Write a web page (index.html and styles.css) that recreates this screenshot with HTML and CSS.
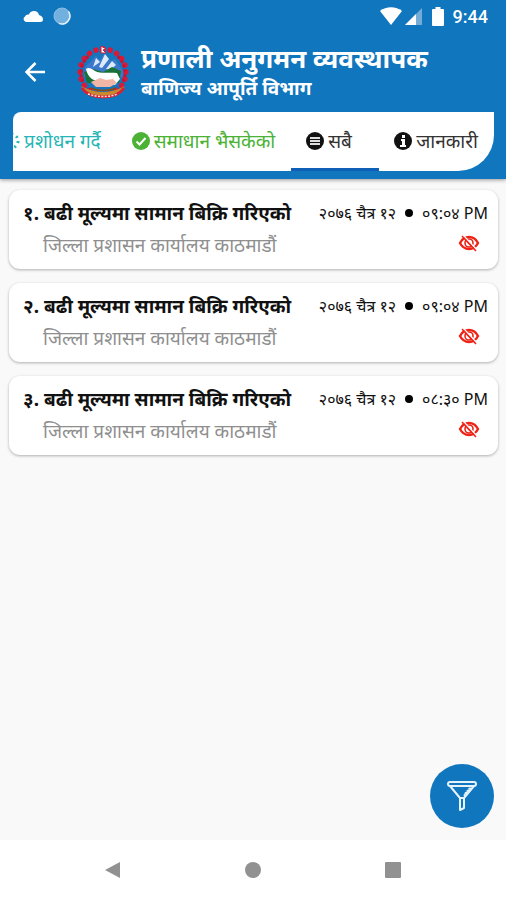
FILE: index.html
```html
<!DOCTYPE html>
<html lang="ne">
<head>
    <meta charset="UTF-8">
    <meta name="viewport" content="width=device-width, initial-scale=1.0">
    <title>प्रणाली अनुगमन व्यवस्थापक</title>
    <link rel="stylesheet" href="styles.css">
</head>
<body>

    <!-- shared icon used by every card -->
    <svg class="sprite" width="0" height="0" aria-hidden="true">
        <symbol id="eye-off" viewBox="0 0 22 18">
            <path d="M2 9C4 5 7 3 11 3s7 2 9 6c-2 4-5 6-9 6s-7-2-9-6z" fill="none" stroke="currentColor" stroke-width="2.400"/>
            <circle cx="11" cy="9" r="4" fill="none" stroke="currentColor" stroke-width="1.600"/>
            <path d="M9 7l5 5" stroke="currentColor" stroke-width="2"/>
            <path d="M5 1l14 15" stroke="#fff" stroke-width="1.400"/>
            <path d="M4 2l14 15" stroke="currentColor" stroke-width="1.600"/>
        </symbol>
    </svg>

    <header class="header">
        <div class="status-bar">
            <svg class="cloud" width="20" height="12" viewBox="0 0 20 12"><path d="M3 12a3 3 0 0 1-1-5.500Q3 4 6 4.500 7 1 11 1q4 0 5 4 4 1 4 4.500 0 2.500-3 2.500z" fill="#fff"/></svg>
            <svg width="18" height="18" viewBox="0 0 18 18"><circle cx="9" cy="9" r="8" fill="#72b1df" stroke="#8fc1e6"/><path d="M15.500 4.500A8 8 0 0 1 6 16.400" fill="none" stroke="#e4f1fa" stroke-width="1.500"/></svg>
            <svg class="wifi" width="22" height="18" viewBox="0 0 22 18"><path d="M0 4C6-1 16-1 22 4L11 18z" fill="#fff"/></svg>
            <svg class="signal" width="17" height="17" viewBox="0 0 17 17"><path d="M17 0v17H0z" fill="#72acd7"/><path d="M11 6v11H0z" fill="#fff"/></svg>
            <svg class="battery" width="12" height="19" viewBox="0 0 12 19"><path d="M3.500 0h5v2H11q1 0 1 1v15q0 1-1 1H1q-1 0-1-1V3q0-1 1-1h2.500z" fill="#fff"/></svg>
            <span class="clock">9:44</span>
        </div>

        <div class="title-bar">
            <button class="back" type="button" aria-label="Back">
                <svg width="20" height="20" viewBox="0 0 20 20" fill="none" stroke="#fff" stroke-width="2.600"><path d="M20 10H2M10.500 1L1.500 10l9 9"/></svg>
            </button>
            <svg class="emblem" width="54" height="54" viewBox="0 0 54 54">
                <circle cx="27" cy="27" r="20" fill="#1676bd"/>
                <path d="M9 22L20 11l4 4 4-6 7 7 4-2 8 12v6H8z" fill="#3c78ca"/>
                <path d="M20 13l4 4-7 5zM29 9l4 5-7 9-3-1zM36 16l4 4-6 5-4-1z" fill="#dbe9fa"/>
                <path d="M8 27l9-3 10 3 9-5 9 4-2 12H11z" fill="#19713a"/>
                <path d="M10 24c2-2 5-1 9 2 6 3 13 1 22 2l3 6-5 6-11-4c-9 1-16-2-18-12z" fill="#fff"/>
                <path d="M15 37l9-4 6 2 7-1 4 4-7 4H20z" fill="#f1b6a5"/>
                <circle cx="27" cy="27" r="23" fill="none" stroke="#d7193a" stroke-width="5.500" stroke-linecap="round" stroke-dasharray="0.1 6.900" pathLength="140"/>
                <path d="M7 37A22 22 0 0 1 14 10M47 37A22 22 0 0 0 40 10" fill="none" stroke="#c51532" stroke-width="3" stroke-dasharray="3 2"/>
                <path d="M5 41q22 12 44 0l-6 8q-16 7-32 0z" fill="#c88a2a"/>
                <path d="M14 43q13 5 26 0" fill="none" stroke="#8d4a18" stroke-width="1.500"/>
                <path d="M6 43q6 9 21 9t21-9" fill="none" stroke="#d42339" stroke-width="3"/>
                <path d="M12 49q15 5 30 0" fill="none" stroke="#ffe3dc" stroke-width="1.400" stroke-dasharray="2 1.400"/>
                <path d="M25 1l5 3-3 1 3 3h-5z" fill="#fff" stroke="#d7193a"/>
            </svg>
            <div class="titles">
                <h1>प्रणाली अनुगमन व्यवस्थापक</h1>
                <h2>बाणिज्य आपूर्ति विभाग</h2>
            </div>
        </div>

        <nav class="tabs">
            <a class="tab teal" href="#review">
                <svg width="18" height="18" viewBox="0 0 18 18"><circle cx="9" cy="9" r="7" fill="none" stroke="currentColor" stroke-width="3" stroke-dasharray="2 3.500"/></svg>
                प्रशोधन गर्दै
            </a>
            <a class="tab green" href="#solved">
                <svg width="18" height="18" viewBox="0 0 18 18"><circle cx="9" cy="9" r="9" fill="currentColor"/><path d="M4.500 9.500l3 3 6-6.500" fill="none" stroke="#fff" stroke-width="2"/></svg>
                समाधान भैसकेको
            </a>
            <a class="tab active" href="#all">
                <svg width="18" height="18" viewBox="0 0 18 18"><circle cx="9" cy="9" r="9" fill="#111"/><path d="M4 6h10M4 9h10M4 12h10" stroke="#ddd" stroke-width="1.800"/></svg>
                सबै
            </a>
            <a class="tab" href="#info">
                <svg width="18" height="18" viewBox="0 0 18 18"><circle cx="9" cy="9" r="9" fill="#111"/><path d="M8 3h3v3H8zM7 7h4v6h1v2H6v-2h2V9H7z" fill="#fff"/></svg>
                जानकारी
            </a>
        </nav>
    </header>

    <main class="list">
        <article class="card">
            <div class="row">
                <h3>१. बढी मूल्यमा सामान बिक्रि गरिएको</h3>
                <div class="time"><span>२०७६ चैत्र १२</span><i class="dot"></i><span>०९:०४ PM</span></div>
            </div>
            <div class="row">
                <p>जिल्ला प्रशासन कार्यालय काठमाडौं</p>
                <svg class="eye" width="22" height="18"><use href="#eye-off"/></svg>
            </div>
        </article>

        <article class="card">
            <div class="row">
                <h3>२. बढी मूल्यमा सामान बिक्रि गरिएको</h3>
                <div class="time"><span>२०७६ चैत्र १२</span><i class="dot"></i><span>०९:०४ PM</span></div>
            </div>
            <div class="row">
                <p>जिल्ला प्रशासन कार्यालय काठमाडौं</p>
                <svg class="eye" width="22" height="18"><use href="#eye-off"/></svg>
            </div>
        </article>

        <article class="card">
            <div class="row">
                <h3>३. बढी मूल्यमा सामान बिक्रि गरिएको</h3>
                <div class="time"><span>२०७६ चैत्र १२</span><i class="dot"></i><span>०८:३० PM</span></div>
            </div>
            <div class="row">
                <p>जिल्ला प्रशासन कार्यालय काठमाडौं</p>
                <svg class="eye" width="22" height="18"><use href="#eye-off"/></svg>
            </div>
        </article>

        <button class="filter" type="button" aria-label="Filter">
            <svg width="30" height="30" viewBox="0 0 30 30" fill="none" stroke="#e6f2fc" stroke-width="2" stroke-linejoin="round">
                <rect x="1" y="1" width="28" height="4" rx="2"/>
                <path d="M3 5l10 12v12l4-2V17L27 5M13 17h4"/>
                <path d="M18 13l5-6M17 15l7-8" stroke-dasharray="2 1"/>
            </svg>
        </button>
    </main>

    <footer class="nav-bar">
        <button type="button" aria-label="Back"><svg width="16" height="16" viewBox="0 0 16 16"><path d="M15 0v16L0 8z"/></svg></button>
        <button type="button" aria-label="Home"><svg width="16" height="16" viewBox="0 0 16 16"><circle cx="8" cy="8" r="8"/></svg></button>
        <button type="button" aria-label="Recent apps"><svg width="16" height="16" viewBox="0 0 16 16"><rect width="16" height="16" rx="1"/></svg></button>
    </footer>

</body>
</html>
```

FILE: styles.css
```css
:root {
    --blue: #1076bd;
}

* {
    box-sizing: border-box;
}

body {
    margin: 0;
    min-height: 100vh;
    display: flex;
    flex-direction: column;
    background: #f9f9f9;
    color: #111;
    font-family: "Noto Sans", "Noto Sans Devanagari", sans-serif;
    font-feature-settings: "locl" 0; /* plain Devanagari digits */
}

h1, h2, h3, p {
    margin: 0;
    white-space: nowrap;
}

svg {
    display: block;
    flex-shrink: 0;
}

button {
    padding: 0;
    border: none;
    background: none;
    cursor: pointer;
}

.sprite {
    position: absolute;
}

/* Header */
.header {
    padding-bottom: 8px;
    background: var(--blue);
    box-shadow: 0 1px 4px rgba(0, 0, 0, 0.4);
}

.status-bar {
    display: flex;
    align-items: center;
    height: 32px;
    padding: 0 18px 0 23px;
}

.cloud {
    margin-right: 10px;
}

.wifi {
    margin-left: auto;
}

.signal {
    margin-left: 3px;
}

.battery {
    margin: 0 9px 0 10px;
}

.clock {
    color: #fff;
    font-family: Roboto, sans-serif;
    font-size: 18px;
    font-weight: 500;
}

.title-bar {
    display: flex;
    align-items: center;
    height: 80px;
    padding-left: 25px;
}

.emblem {
    margin: 0 11px 0 31px;
}

.titles {
    color: #fff;
}

.titles h1 {
    font-size: 26px;
    line-height: 32px;
}

.titles h2 {
    font-size: 19px;
    line-height: 28px;
}

.tabs {
    display: flex;
    justify-content: flex-end;
    height: 59px;
    margin: 0 12px 0 13px;
    overflow: hidden;
    background: #fff;
    border-radius: 8px 0 36px 0;
}

.tab {
    display: flex;
    flex-shrink: 0;
    align-items: center;
    gap: 4px;
    min-width: 88px;
    padding: 2px 16px 0 15px;
    border-bottom: 3px solid transparent;
    color: #333;
    font-size: 19px;
    text-decoration: none;
    white-space: nowrap;
}

.tab.active {
    border-bottom-color: #0d60b5;
}

.tab.teal {
    color: #27b5b5;
}

.tab.green {
    color: #4bb235;
}

/* List of complaints */
.list {
    position: relative;
    flex: 1;
    display: flex;
    flex-direction: column;
    gap: 14px;
    padding: 11px 8px 12px 9px;
}

.card {
    padding: 7px 10px 8px 14px;
    background: #fff;
    border-radius: 11px;
    box-shadow: 0 1px 3px rgba(0, 0, 0, 0.3);
}

.row {
    display: flex;
    align-items: center;
    justify-content: space-between;
}

.card h3 {
    font-size: 19px;
    line-height: 32px;
}

.card p {
    padding-left: 20px;
    color: #8f8f8f;
    font-size: 19px;
    line-height: 32px;
}

.time {
    display: flex;
    align-items: center;
    gap: 9px;
    font-size: 16px;
    white-space: nowrap;
}

.dot {
    width: 8px;
    height: 8px;
    border-radius: 50%;
    background: #000;
}

.eye {
    margin: 0 8px 4px 0;
    color: #ee2417;
}

.filter {
    position: absolute;
    right: 12px;
    bottom: 12px;
    display: flex;
    align-items: center;
    justify-content: center;
    width: 64px;
    height: 64px;
    border-radius: 50%;
    background: var(--blue);
}

/* Android buttons */
.nav-bar {
    display: flex;
    align-items: center;
    justify-content: center;
    gap: 124px;
    height: 60px;
    background: #fff;
    fill: #919191;
}
```
